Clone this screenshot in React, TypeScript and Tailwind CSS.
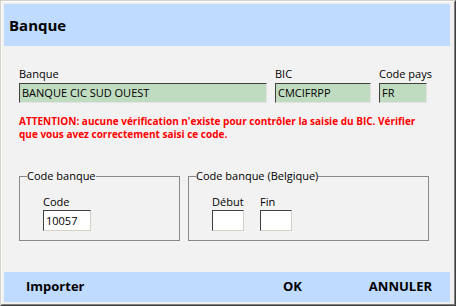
import React from 'react';

const font = "font-['Open_Sans','Noto_Sans',sans-serif]";

const Field: React.FC<{ label: string; value: string; width: string }> = ({ label, value, width }) => (
  <div className={`flex flex-col ${width}`}>
    <label className="text-[11px] leading-[14px] text-black h-[14px] whitespace-nowrap">{label}</label>
    <div className="mt-[2px] h-[20px] bg-[#c0dcc0] border border-t-[#404040] border-l-[#404040] border-r-[#e3e3e3] border-b-[#e3e3e3] px-[2px] text-[11px] leading-[18px] text-black">
      {value}
    </div>
  </div>
);

const SmallInput: React.FC<{ label: string; value?: string; width: string }> = ({ label, value, width }) => (
  <div className="flex flex-col">
    <span className="text-[11px] leading-[14px] h-[14px] text-black">{label}</span>
    <div className={`mt-[1px] h-[21px] ${width} bg-white border border-t-[#404040] border-l-[#404040] border-r-[#d4d0c8] border-b-[#d4d0c8] px-[2px] text-[11px] leading-[19px] text-black`}>
      {value}
    </div>
  </div>
);

const GroupBox: React.FC<{ title: string; width: string; children: React.ReactNode }> = ({ title, width, children }) => (
  <fieldset className={`${width} h-[72px] border border-[#8a8a8a] px-[7px] pt-[12px]`}>
    <legend className="text-[11px] leading-[14px] text-black">{title}</legend>
    <div className="flex gap-[16px] pl-[16px]">{children}</div>
  </fieldset>
);

export default function App() {
  return (
    <div className={`w-[456px] h-[306px] ${font} border border-t-[#d4d0c8] border-l-[#d4d0c8] border-r-[#404040] border-b-[#404040]`}>
      <div className="w-full h-full border border-t-white border-l-white border-r-[#808080] border-b-[#808080] bg-[#f0f0f0] pt-[2px] pl-[2px] pr-[4px] pb-[2px] flex flex-col">
        <div className="h-[42px] bg-[#bfdbff] flex items-center pl-[5px]">
          <h1 className="text-[15px] font-bold text-black">Banque</h1>
        </div>
        <div className="flex-1 bg-[#f2f2f2] pl-[15px] pt-[21px]">
          <div className="flex gap-[8px]">
            <Field label="Banque" value="BANQUE CIC SUD OUEST" width="w-[248px]" />
            <Field label="BIC" value="CMCIFRPP" width="w-[96px]" />
            <Field label="Code pays" value="FR" width="w-[48px]" />
          </div>
          <p className="mt-[12px] w-[405px] text-[10px] leading-[13px] font-bold text-[#ff0000]">
            ATTENTION: aucune vérification n'existe pour contrôler la saisie du BIC. Vérifier que vous avez correctement saisi ce code.
          </p>
          <div className="mt-[28px] flex gap-[8px]">
            <GroupBox title="Code banque" width="w-[161px]">
              <SmallInput label="Code" value="10057" width="w-[48px]" />
            </GroupBox>
            <GroupBox title="Code banque (Belgique)" width="w-[241px]">
              <SmallInput label="Début" width="w-[32px]" />
              <SmallInput label="Fin" width="w-[32px]" />
            </GroupBox>
          </div>
        </div>
        <div className="h-[30px] bg-[#bfdbff] flex items-center text-[13px] font-bold text-black pr-[18px]">
          <span className="ml-[22px]">Importer</span>
          <span className="flex-1" />
          <span>OK</span>
          <span className="ml-[67px]">ANNULER</span>
        </div>
      </div>
    </div>
  );
}
